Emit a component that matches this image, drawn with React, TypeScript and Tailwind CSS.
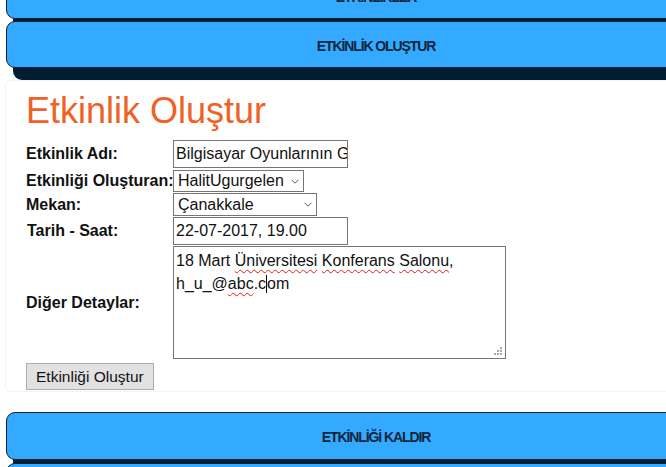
import React from "react";

function Chevron() {
  return (
    <svg width="8" height="5" viewBox="0 0 8 5" className="shrink-0">
      <path d="M0.5 0.7 L4 4.2 L7.5 0.7" fill="none" stroke="#5a5a5a" strokeWidth="1" />
    </svg>
  );
}

function Grip() {
  return (
    <svg width="9" height="9" viewBox="0 0 9 9">
      <rect x="6" y="0" width="2" height="2" fill="#a8a8a8" />
      <rect x="3" y="3" width="2" height="2" fill="#a8a8a8" />
      <rect x="6" y="3" width="2" height="2" fill="#a8a8a8" />
      <rect x="0" y="6" width="2" height="2" fill="#a8a8a8" />
      <rect x="3" y="6" width="2" height="2" fill="#a8a8a8" />
      <rect x="6" y="6" width="2" height="2" fill="#a8a8a8" />
    </svg>
  );
}

const wavy = "underline decoration-wavy decoration-[#e21b1b] decoration-1 underline-offset-[3px]";

export default function App() {
  return (
    <div className="h-[467px] w-full overflow-hidden bg-white font-['Liberation_Sans',Arial,sans-serif] text-[#111]">
      {/* Bar 1 (cut off at top) */}
      <div className="-mt-[28px] ml-[6px] flex h-[47px] w-[740px] items-center justify-center rounded-[9px] border border-[#0b2236] bg-[#33aaff] pt-[3px] shadow-[7px_12px_0_#011d31]">
        <span className="text-[14px] font-bold tracking-[-1.1px] text-[#10263a]">ETKİNLİKLER</span>
      </div>
      {/* Bar 2 */}
      <div className="mt-[2px] ml-[6px] flex h-[47px] w-[740px] items-center justify-center rounded-[9px] border border-[#0b2236] bg-[#33aaff] pt-[3px] shadow-[7px_12px_0_#011d31]">
        <span className="text-[14px] font-bold tracking-[-1.1px] text-[#10263a]">ETKİNLİK OLUŞTUR</span>
      </div>

      {/* Panel */}
      <div className="mt-[12px] ml-[5px] w-[760px] rounded-[5px] border border-[#f3f3f3] pb-[1px] pl-[19px] pt-[9px]">
        <h1 className="ml-[1px] text-[36px] leading-[41px] text-[#ef6124]">Etkinlik Oluştur</h1>

        <div className="mt-[9px] flex flex-col">
          {/* Row 1 */}
          <div className="flex h-[28px] items-center">
            <div className="w-[148px] pl-[1px] text-[16px] font-bold">Etkinlik Adı:</div>
            <div className="flex h-[28px] w-[175px] items-center overflow-hidden whitespace-nowrap border border-[#767676] pl-[2px] text-[16px]">
              Bilgisayar Oyunlarının G
            </div>
          </div>
          {/* Row 2 */}
          <div className="mt-[2px] flex h-[22px] items-center">
            <div className="w-[148px] whitespace-nowrap pl-[1px] text-[16px] font-bold">Etkinliği Oluşturan:</div>
            <div className="flex h-[22px] w-[131px] items-center justify-between border border-[#767676] pl-[4px] pr-[4px] text-[16px]">
              <span>HalitUgurgelen</span>
              <Chevron />
            </div>
          </div>
          {/* Row 3 */}
          <div className="mt-[1px] flex h-[23px] items-center">
            <div className="w-[148px] pl-[1px] text-[16px] font-bold">Mekan:</div>
            <div className="flex h-[23px] w-[144px] items-center justify-between border border-[#767676] pl-[4px] pr-[4px] text-[16px]">
              <span>Çanakkale</span>
              <Chevron />
            </div>
          </div>
          {/* Row 4 */}
          <div className="mt-[1px] flex h-[28px] items-center">
            <div className="w-[148px] pl-[2px] text-[16px] font-bold">Tarih - Saat:</div>
            <div className="flex h-[28px] w-[175px] items-center border border-[#767676] pl-[2px] text-[16px]">
              22-07-2017, 19.00
            </div>
          </div>
          {/* Row 5 */}
          <div className="mt-[1px] flex h-[113px] items-center">
            <div className="w-[148px] pl-[1px] text-[16px] font-bold">Diğer Detaylar:</div>
            <div className="relative h-[113px] w-[333px] border border-[#767676] pl-[2px] pt-[2px] text-[16px] leading-[23px]">
              <div className="whitespace-nowrap">
                18 Mart <span className={wavy}>Üniversitesi</span> <span className={wavy}>Konferans</span>{" "}
                <span className={wavy}>Salonu</span>,
              </div>
              <div className="flex items-center whitespace-nowrap">
                <span>h_u_@</span>
                <span className={wavy}>abc</span>
                <span>.c</span>
                <span className="inline-block h-[18px] w-[1px] bg-black" />
                <span>om</span>
              </div>
              <div className="absolute bottom-[2px] right-[2px] flex">
                <Grip />
              </div>
            </div>
          </div>
          {/* Button */}
          <div className="mt-[4px] flex">
            <div className="ml-[1px] flex h-[27px] items-center border border-[#adadad] bg-[#e1e1e1] px-[9px] text-[15.5px]">
              Etkinliği Oluştur
            </div>
          </div>
        </div>
      </div>

      {/* Bar 3 */}
      <div className="mt-[20px] ml-[6px] flex h-[48px] w-[740px] items-center justify-center rounded-[9px] border border-[#0b2236] bg-[#33aaff] pt-[3px] shadow-[7px_12px_0_#011d31]">
        <span className="text-[14px] font-bold tracking-[-1.1px] text-[#10263a]">ETKİNLİĞİ KALDIR</span>
      </div>
      {/* Bar 4 */}
      <div className="mt-[3px] ml-[6px] h-[48px] w-[740px] rounded-[9px] border border-[#0b2236] bg-[#33aaff] shadow-[7px_12px_0_#011d31]" />
    </div>
  );
}
